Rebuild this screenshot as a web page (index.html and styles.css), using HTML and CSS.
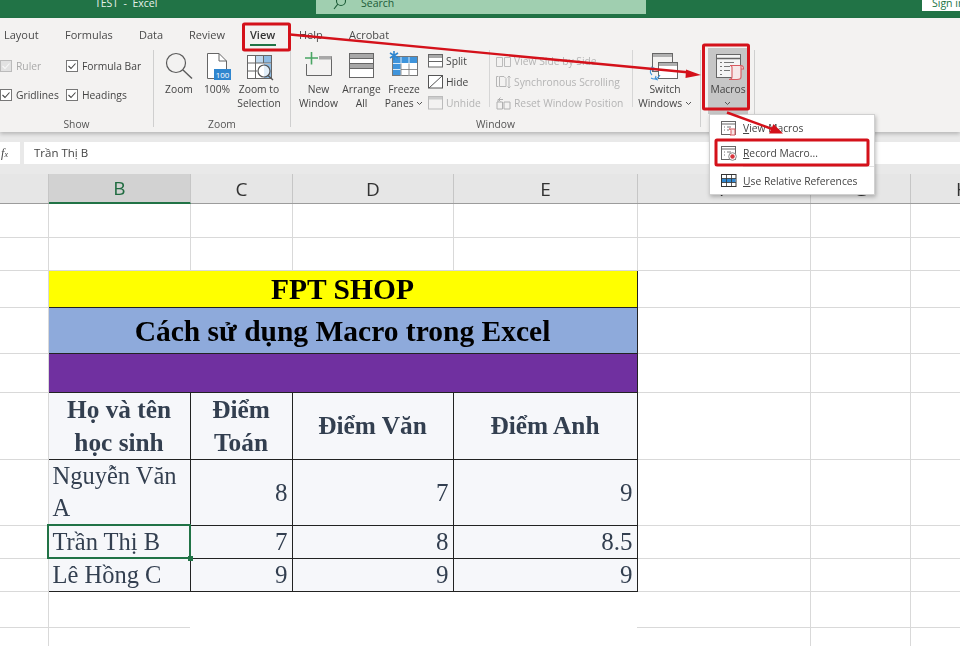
FILE: index.html
```html
<!DOCTYPE html>
<html lang="vi">
<head>
<meta charset="utf-8">
<title>TEST - Excel</title>
<link rel="stylesheet" href="styles.css">
</head>
<body>
<div class="app">
  <header class="titlebar">
    <div class="doc-title">TEST&nbsp; -&nbsp; Excel</div>
    <div class="search">
      <svg class="search-icon" width="14" height="12" viewBox="0 0 14 12"><circle cx="8" cy="1" r="4.5"/><path d="M4.8 4.2 1 9"/></svg>
      <span>Search</span>
    </div>
    <div class="signin">Sign in</div>
  </header>

  <section class="ribbon">
    <nav class="tabs">
      <span>Layout</span><span>Formulas</span><span>Data</span><span>Review</span>
      <span class="tab-on">View</span><span>Help</span><span>Acrobat</span>
    </nav>
    <div class="groups">
      <div class="group g-show">
        <div class="group-body show-grid">
          <label class="check off"><svg width="12" height="12" viewBox="0 0 12 12"><rect x=".5" y=".5" width="11" height="11"/><path d="M2.5 6 5 8.5 9.5 3.5"/></svg>Ruler</label>
          <label class="check"><svg width="12" height="12" viewBox="0 0 12 12"><rect x=".5" y=".5" width="11" height="11"/><path d="M2.5 6 5 8.5 9.5 3.5"/></svg>Formula Bar</label>
          <label class="check"><svg width="12" height="12" viewBox="0 0 12 12"><rect x=".5" y=".5" width="11" height="11"/><path d="M2.5 6 5 8.5 9.5 3.5"/></svg>Gridlines</label>
          <label class="check"><svg width="12" height="12" viewBox="0 0 12 12"><rect x=".5" y=".5" width="11" height="11"/><path d="M2.5 6 5 8.5 9.5 3.5"/></svg>Headings</label>
        </div>
        <div class="group-label">Show</div>
      </div>
      <i class="sep"></i>
      <div class="group g-zoom">
        <div class="group-body">
          <div class="big w36">
            <svg width="36" height="31" viewBox="0 0 36 31" fill="none" stroke="#5a5a5a" stroke-width="1.2"><circle cx="15" cy="12" r="9.5"/><path d="M22 19 31 27.5" stroke-width="1.4"/></svg>
            <span>Zoom</span>
          </div>
          <div class="big w40">
            <svg width="40" height="31" viewBox="0 0 40 31"><path d="M10.5 2.5H22L29.5 10V27.5H10.5Z" fill="#fff" stroke="#666"/><path d="M22 2.5V10H29.5" fill="none" stroke="#666"/><rect x="17" y="18" width="17" height="11" fill="#2f86cf"/><text x="25.5" y="27" class="pct">100</text></svg>
            <span>100%</span>
          </div>
          <div class="big w44">
            <svg width="44" height="31" viewBox="0 0 44 31"><rect x="10.5" y="4.5" width="24" height="23" fill="#fff" stroke="#666"/><rect x="27" y="5" width="7" height="7" fill="#8dbbe3"/><rect x="19" y="5" width="7" height="7" fill="#bcd7ee"/><rect x="27" y="13" width="7" height="14" fill="#8dbbe3"/><path d="M10.5 12H34.5M18.5 4.5V27.5M26.5 4.5V12M10.5 20H20" stroke="#666" fill="none"/><circle cx="27" cy="20" r="6" fill="#fff" fill-opacity=".75" stroke="#555" stroke-width="1.2"/><path d="M31 24.5 36 29" stroke="#555" stroke-width="1.4"/></svg>
            <span>Zoom to<br>Selection</span>
          </div>
        </div>
        <div class="group-label">Zoom</div>
      </div>
      <i class="sep"></i>
      <div class="group g-window">
        <div class="group-body">
          <div class="big w41">
            <svg width="41" height="31" viewBox="0 0 41 31" fill="none"><path d="M8.5 13V24.5H33.5V5.5H21" stroke="#666"/><rect x="21" y="5" width="12.5" height="3.5" fill="#a8a8a8"/><path d="M13.5 1V13.5M7 7H20" stroke="#4aa564" stroke-width="1.6"/></svg>
            <span>New<br>Window</span>
          </div>
          <div class="big w45">
            <svg width="45" height="31" viewBox="0 0 45 31"><rect x="10.5" y="2.5" width="24" height="24" fill="#fff" stroke="#666"/><rect x="11" y="3" width="23" height="4" fill="#a8a8a8"/><rect x="11" y="13" width="23" height="4" fill="#a8a8a8"/><path d="M10.5 7.5H34.5M10.5 12.5H34.5M10.5 17.5H34.5" stroke="#666"/></svg>
            <span>Arrange<br>All</span>
          </div>
          <div class="big w40">
            <svg width="40" height="31" viewBox="0 0 40 31"><rect x="8.5" y="5.5" width="25" height="19" fill="#fff" stroke="#777"/><rect x="9" y="6" width="24" height="6" fill="#3f94db"/><rect x="9" y="6" width="8" height="18" fill="#3f94db"/><path d="M17 6V24.5M25 6V24.5M9 12.5H33M9 18.5H33" stroke="#fff" stroke-width=".8"/><path d="M17 12.5V24.5M25 12.5V24.5M17 18.5H33" stroke="#777" stroke-width=".8"/><path d="M10 0V9M6 2 14 7M14 2 6 7" stroke="#2f86cf" stroke-width="1.6" fill="none"/></svg>
            <span>Freeze<br>Panes <svg class="chev" width="7" height="5" viewBox="0 0 7 5"><path d="M1 1 3.5 3.5 6 1"/></svg></span>
          </div>
          <div class="small-col c1">
            <div class="small"><svg width="15" height="14" viewBox="0 0 15 14"><rect x=".5" y=".5" width="14" height="12.5" fill="#fff" stroke="#666"/><rect x="1" y="1" width="13" height="3" fill="#a8a8a8"/><path d="M.5 7.5H14.5" stroke="#666"/></svg>Split</div>
            <div class="small"><svg width="15" height="14" viewBox="0 0 15 14"><rect x=".5" y=".5" width="14" height="12.5" fill="#fff" stroke="#555"/><path d="M1 13 14 1" stroke="#555"/></svg>Hide</div>
            <div class="small dim"><svg width="15" height="14" viewBox="0 0 15 14"><rect x=".5" y=".5" width="14" height="12.5" fill="#f3f2f1" stroke="#bbb"/><rect x="1" y="1" width="13" height="2.5" fill="#ccc"/></svg>Unhide</div>
          </div>
          <i class="sep-in"></i>
          <div class="small-col c2">
            <div class="small dim"><svg width="15" height="14" viewBox="0 0 15 14" fill="none" stroke="#bbb"><path d="M.5 3.5H6.5V12.5H.5ZM8.5 3.5H14.5V12.5H8.5Z"/></svg>View Side by Side</div>
            <div class="small dim"><svg width="15" height="14" viewBox="0 0 15 14" fill="none" stroke="#b5b5b5"><path d="M2.5 1.5H.5V11.5H2.5"/><path d="M3.5 1.5H8L10 3.5V11.5H3.5Z"/><path d="M13 1V13M11.5 2.5 13 1 14.5 2.5M11.5 11.5 13 13 14.5 11.5"/></svg>Synchronous Scrolling</div>
            <div class="small dim"><svg width="15" height="14" viewBox="0 0 15 14" fill="none" stroke="#b0b0b0"><path d="M1 6V13H6.5V6ZM8 6V13H14V6ZM2 6V3.5H7M4.500 1.500 2.500 3.500 4.500 5.500"/></svg>Reset Window Position</div>
          </div>
          <i class="sep-in"></i>
          <div class="big w64">
            <svg width="64" height="31" viewBox="0 0 64 31"><rect x="19.500" y="2.500" width="20" height="18" fill="#f3f2f1" stroke="#666"/><rect x="20" y="3" width="19" height="3" fill="#b0b0b0"/><rect x="25.500" y="11.500" width="19" height="16" fill="#fff" stroke="#666"/><rect x="26" y="12" width="18" height="3" fill="#b0b0b0"/><path d="M19 24C16 21 17 18 21 17M18 16l3 1-1 3M27 24C25 28 21 29 18 27M25 29l-3-1 1-3" fill="none" stroke="#3f94db" stroke-width="1.1"/></svg>
            <span>Switch<br>Windows <svg class="chev" width="7" height="5" viewBox="0 0 7 5"><path d="M1 1 3.5 3.5 6 1"/></svg></span>
          </div>
        </div>
        <div class="group-label">Window</div>
      </div>
      <i class="sep"></i>
      <div class="group g-macros">
        <div class="macro-btn">
          <svg width="40" height="31" viewBox="0 0 40 31"><rect x="8.500" y="3.500" width="24" height="23" fill="#f4f4f4" stroke="#666"/><path d="M8.500 7.500H32.500" stroke="#666" stroke-width="1.500"/><path d="M12 11.500H14M16 11.500H26M12 15.500H14M16 15.500H22M12 19.500H14M16 19.500H22M12 23.500H14" stroke="#777"/><path d="M22 14.500H33V26C33 28 31 28.500 29 28.500H21C23 28.500 24 27.500 24 26V16.500C24 15 23 14.500 22 14.500ZM33 14.500C35 14.500 35.500 16 35.500 18H33" fill="#f6e7e7" stroke="#d8595f" stroke-width="1.100"/></svg>
          <span>Macros<br><svg class="chev" width="7" height="5" viewBox="0 0 7 5"><path d="M1 1 3.500 3.500 6 1"/></svg></span>
        </div>
      </div>
      <i class="sep"></i>
    </div>
  </section>

  <section class="formula">
    <div class="fx"><i>f</i><small>x</small></div>
    <div class="formula-input">Trần Thị B</div>
  </section>

  <div class="headers">
    <div class="corner"></div>
    <div class="hd hd-on">B</div>
    <div class="hd">C</div>
    <div class="hd">D</div>
    <div class="hd">E</div>
    <div class="hd">F</div>
    <div class="hd">G</div>
    <div class="hd hd-h">H</div>
  </div>

  <main class="sheet">
    <table class="cells">
      <colgroup>
        <col class="c-a"><col class="c-b"><col class="c-c"><col class="c-d"><col class="c-e"><col class="c-f"><col class="c-g"><col class="c-h">
      </colgroup>
      <tr class="r33"><td></td><td></td><td></td><td></td><td></td><td></td><td></td><td></td></tr>
      <tr class="r33"><td></td><td></td><td></td><td></td><td></td><td></td><td></td><td></td></tr>
      <tr class="r37"><td></td><td colspan="4" class="t title yellow">FPT SHOP</td><td></td><td></td><td></td></tr>
      <tr class="r46"><td></td><td colspan="4" class="t title blue">Cách sử dụng Macro trong Excel</td><td></td><td></td><td></td></tr>
      <tr class="r39"><td></td><td colspan="4" class="t purple"></td><td></td><td></td><td></td></tr>
      <tr class="r67"><td></td><td class="t th">Họ và tên học sinh</td><td class="t th">Điểm Toán</td><td class="t th">Điểm Văn</td><td class="t th">Điểm Anh</td><td></td><td></td><td></td></tr>
      <tr class="r66"><td></td><td class="t name two">Nguyễn Văn A</td><td class="t num">8</td><td class="t num">7</td><td class="t num">9</td><td></td><td></td><td></td></tr>
      <tr class="r33"><td></td><td class="t name active">Trần Thị B</td><td class="t num">7</td><td class="t num">8</td><td class="t num">8.5</td><td></td><td></td><td></td></tr>
      <tr class="r33"><td></td><td class="t name">Lê Hồng C</td><td class="t num">9</td><td class="t num">9</td><td class="t num">9</td><td></td><td></td><td></td></tr>
      <tr class="r36"><td></td><td class="open-r"></td><td colspan="3" rowspan="2" class="blank"></td><td class="open-l"></td><td></td><td></td></tr>
      <tr class="r36"><td class="open-b"></td><td class="open-r open-b"></td><td class="open-l"></td><td></td><td></td></tr>
    </table>
  </main>

  <div class="menu">
    <div class="menu-item">
      <svg width="16" height="16" viewBox="0 0 16 16"><rect x=".5" y="1.500" width="14" height="13" fill="#fff" stroke="#666"/><path d="M.5 4H14.500" stroke="#666"/><path d="M3 7H4M6 7H10M3 10H4M6 10H8" stroke="#777"/><path d="M8 9H14V15H9C10 15 10 14 10 13V10.500C10 9.500 9 9 8 9Z" fill="#f6e7e7" stroke="#d8595f"/></svg>
      <span><u>V</u>iew Macros</span>
    </div>
    <div class="menu-item">
      <svg width="16" height="16" viewBox="0 0 16 16"><rect x=".5" y="1.500" width="14" height="13" fill="#fff" stroke="#666"/><path d="M.5 4H14.500" stroke="#666"/><path d="M3 7H4M6 7H10M3 10H4" stroke="#777"/><circle cx="11.500" cy="11.500" r="3.800" fill="#fff" stroke="#888"/><circle cx="11.500" cy="11.500" r="2.200" fill="#d8343c"/></svg>
      <span><u>R</u>ecord Macro...</span>
    </div>
    <div class="menu-rule"></div>
    <div class="menu-item">
      <svg width="16" height="16" viewBox="0 0 16 16"><rect x=".5" y="1.500" width="14.500" height="12" fill="#fff" stroke="#333"/><rect x="1" y="5.500" width="13.500" height="4" fill="#2f86cf"/><path d="M5.500 1.500V13.500M10.500 1.500V13.500M.5 5.500H15M.5 9.500H15" stroke="#333" stroke-width=".8"/></svg>
      <span><u>U</u>se Relative References</span>
    </div>
  </div>

  <svg class="callouts" width="960" height="646" viewBox="0 0 960 646">
    <rect x="243.500" y="24" width="46" height="26" rx="1"/>
    <rect x="703.500" y="45" width="45" height="64" rx="1"/>
    <rect x="716" y="140" width="152" height="25" rx="1"/>
    <path class="shaft" d="M290 34.500 690 72.500"/>
    <path class="head" d="M701 75 686 69.500 685.500 78Z"/>
    <path class="shaft" d="M727 112.500 772 129"/>
    <path class="head" d="M783 133.500 769 133.500 773.500 124Z"/>
  </svg>
</div>
</body>
</html>
```

FILE: styles.css
```css
* { box-sizing: border-box; }
html, body { margin: 0; padding: 0; background: #fff; }
body { font-family: "Open Sans", "Noto Sans", "Liberation Sans", sans-serif; color: #444; }
.app { position: relative; width: 960px; height: 646px; overflow: hidden; display: flex; flex-direction: column; filter: blur(.3px); }

.titlebar { flex: 0 0 18px; background: #217346; display: flex; align-items: flex-start; overflow: hidden; color: #fff; font-size: 10.5px; line-height: 14px; }
.doc-title { width: 316px; padding-left: 95px; margin-top: -4px; white-space: nowrap; color: #e6f1ea; }
.search { width: 330px; height: 14px; background: #a0cfb0; display: flex; align-items: center; color: #1d5c38; overflow: hidden; padding-left: 17px; }
.search span { margin-left: 14px; margin-top: -8px; }
.search-icon { fill: none; stroke: #1d5c38; stroke-width: 1.1; margin-top: -2px; }
.signin { margin-left: 276px; width: 38px; height: 11px; background: #fff; color: #217346; padding-left: 10px; line-height: 6px; white-space: nowrap; overflow: hidden; }

.ribbon { flex: 0 0 114px; background: #f3f2f1; box-shadow: 0 2px 4px rgba(0,0,0,.22); position: relative; z-index: 2; overflow: hidden; font-size: 10.3px; }
.tabs { height: 32px; padding-left: 4px; display: grid; grid-template-columns: 61px 74px 50px 61px 49px 50px auto; align-items: center; font-size: 11px; color: #4a4a4a; }
.tab-on { position: relative; color: #333; font-weight: 600; }
.tab-on::after { content: ""; position: absolute; left: 0; top: 17px; width: 26px; height: 2px; background: #217346; }

.groups { display: flex; height: 82px; }
.group { display: flex; flex-direction: column; flex: none; }
.group-body { height: 66px; display: flex; }
.group-label { height: 16px; line-height: 16px; text-align: center; color: #555; }
.sep { flex: 0 0 1px; height: 77px; background: #cfcfcf; }
.sep-in { flex: 0 0 1px; height: 57px; background: #d6d6d6; }
.g-show { width: 153px; }
.g-zoom { width: 136px; }
.g-zoom .group-body { padding-left: 7px; }
.g-window { width: 409px; }
.g-window .group-body { padding-left: 7px; }
.g-macros { width: 53px; padding-left: 7px; }

.show-grid { display: grid; grid-template-columns: 66px 87px; grid-auto-rows: 18px; row-gap: 11px; padding-top: 7px; }
.check { display: flex; align-items: center; gap: 4px; white-space: nowrap; color: #444; }
.check svg { flex: none; fill: #fff; stroke: #777; }
.check path { fill: none; stroke: #444; stroke-width: 1.1; }
.check.off { color: #aaa; }
.check.off svg { fill: #e2e2e2; stroke: #bbb; }
.check.off path { stroke: #f8f8f8; }

.big { flex: none; display: flex; flex-direction: column; align-items: center; text-align: center; line-height: 14px; padding-top: 1px; white-space: nowrap; color: #444; }
.big svg:first-child { flex: none; display: block; }
.w36 { width: 36px; } .w40 { width: 40px; } .w41 { width: 41px; } .w44 { width: 44px; } .w45 { width: 45px; } .w64 { width: 64px; }
.pct { font-size: 8px; fill: #fff; text-anchor: middle; font-family: "Open Sans", sans-serif; }
.chev { fill: none; stroke: #555; stroke-width: 1; vertical-align: 1px; }

.small-col { flex: none; display: flex; flex-direction: column; }
.small-col.c1 { width: 65px; padding-left: 4px; }
.small-col.c2 { width: 142px; padding-left: 6px; }
.small { height: 21px; display: flex; align-items: center; gap: 3px; white-space: nowrap; color: #444; }
.small svg { flex: none; }
.small.dim { color: #b4b4b4; }

.macro-btn { width: 40px; height: 66px; margin-top: -2px; background: #c6c6c6; display: flex; flex-direction: column; align-items: center; text-align: center; line-height: 14px; padding-top: 3px; color: #444; }
.macro-btn svg:first-child { flex: none; display: block; }

.formula { flex: 0 0 42px; background: #e9e9e9; display: flex; gap: 4px; padding-top: 10px; }
.fx { width: 20px; height: 22px; background: #fff; font-family: "Liberation Serif", serif; font-size: 12px; line-height: 22px; color: #444; white-space: nowrap; text-align: right; padding-right: 12px; }
.fx small { font-size: 8px; font-style: italic; }
.formula-input { flex: 1; height: 22px; background: #fff; padding-left: 10px; font-size: 11.5px; line-height: 22px; color: #444; }

.headers { flex: 0 0 30px; display: grid; grid-template-columns: 49px 142px 102px 161px 184px 173px 100px 49px; background: #e6e6e6; border-bottom: 1px solid #9c9c9c; }
.hd { display: flex; align-items: center; justify-content: center; border-right: 1px solid #c6c6c6; font-size: 19px; color: #333; }
.hd-on { background: #d2d2d2; color: #1f6b40; border-bottom: 2px solid #217346; margin-bottom: -1px; }
.hd-h { justify-content: flex-start; padding-left: 45px; border-right: 0; }
.corner { border-right: 1px solid #c6c6c6; }

.sheet { flex: 1; overflow: hidden; }
.cells { border-collapse: collapse; table-layout: fixed; width: 960px; }
.c-a { width: 48px; } .c-b { width: 142px; } .c-c { width: 102px; } .c-d { width: 161px; } .c-e { width: 184px; } .c-f { width: 173px; } .c-g { width: 100px; } .c-h { width: 50px; }
.r33 { height: 33px; } .r36 { height: 36px; } .r37 { height: 37px; } .r39 { height: 39px; } .r46 { height: 46px; } .r66 { height: 66px; } .r67 { height: 67px; }
td { padding: 0; border: 1px solid #d9d9d9; }
.cells tr:first-child td { border-top: 0; }
.cells td:first-child { border-left: 0; }
.cells td:last-child { border-right: 0; }
td.t { border: 1px solid #222; font-family: "Liberation Serif", "Times New Roman", serif; background: #f6f7fa; color: #333f50; line-height: 33px; }
.r33 td.t { line-height: 32px; }
td.title { text-align: center; font-weight: bold; font-size: 29.5px; color: #000; padding-top: 2px; }
td.yellow { background: #ffff00; }
td.blue { background: #8eaadb; }
td.purple { background: #7030a0; }
td.th { text-align: center; font-weight: bold; font-size: 25.3px; color: #333f50; padding: 0 8px; }
td.name { font-size: 24.5px; padding: 0 4px; }
td.name.two { line-height: 32.5px; }
td.num { font-size: 25px; text-align: right; padding: 0 4px; }
td.active { position: relative; outline: 2px solid #217346; outline-offset: -1px; z-index: 1; }
td.active::after { content: ""; position: absolute; right: -3px; bottom: -3px; width: 5px; height: 5px; background: #217346; }
td.blank { border: 0; border-top: 1px solid #222; background: #fff; }
td.open-r { border-right: 0; }
td.open-b { border-bottom: 0; }
td.open-l { border-left: 0; }

.menu { position: absolute; left: 709px; top: 114px; width: 166px; height: 81px; background: #fff; border: 1px solid #d0d0d0; box-shadow: 1px 2px 4px rgba(0,0,0,.25); z-index: 3; font-size: 10.3px; color: #444; }
.menu-item { height: 25px; display: flex; align-items: center; gap: 6px; padding-left: 11px; white-space: nowrap; }
.menu-item svg { flex: none; }
.menu-rule { height: 1px; margin: 1px 0 1px 33px; background: #e2e2e2; }

.callouts { position: absolute; left: 0; top: 0; z-index: 4; pointer-events: none; fill: none; }
.callouts rect { stroke: #d4111a; stroke-width: 3; }
.shaft { stroke: #d4111a; stroke-width: 2.4; }
.head { fill: #d4111a; }
```
